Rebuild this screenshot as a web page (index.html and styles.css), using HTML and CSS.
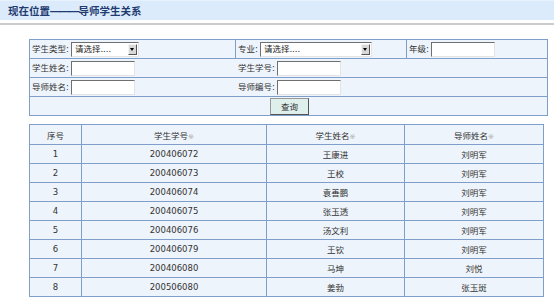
FILE: index.html
```html
<!DOCTYPE html>
<html lang="zh-CN">
<head>
    <meta charset="UTF-8">
    <title>导师学生关系</title>
    <link rel="stylesheet" href="styles.css">
</head>
<body>

    <div class="titleBar">现在位置<span class="dash">———</span>导师学生关系</div>
    <div class="titleLine"></div>

    <table class="searchTable">
        <tr>
            <td class="w1">学生类型:<span class="sel sel1">请选择....<i class="arrow"></i></span></td>
            <td class="w2">专业:<span class="sel sel2">请选择....<i class="arrow"></i></span></td>
            <td class="w3">年级:<span class="inp"></span></td>
        </tr>
        <tr>
            <td>学生姓名:<span class="inp"></span></td>
            <td colspan="2" class="noLeft">学生学号:<span class="inp"></span></td>
        </tr>
        <tr>
            <td>导师姓名:<span class="inp"></span></td>
            <td colspan="2" class="noLeft">导师编号:<span class="inp"></span></td>
        </tr>
        <tr>
            <td colspan="3" class="center"><button class="btn">查询</button></td>
        </tr>
    </table>

    <table class="listTable">
        <tr class="head">
            <td class="c1">序号</td>
            <td class="c2">学生学号<span class="mark">※</span></td>
            <td class="c3">学生姓名<span class="mark">※</span></td>
            <td class="c4">导师姓名<span class="mark">※</span></td>
        </tr>
        <tr><td>1</td><td>200406072</td><td>王康进</td><td>刘明军</td></tr>
        <tr><td>2</td><td>200406073</td><td>王校</td><td>刘明军</td></tr>
        <tr><td>3</td><td>200406074</td><td>袁善鹏</td><td>刘明军</td></tr>
        <tr><td>4</td><td>200406075</td><td>张玉透</td><td>刘明军</td></tr>
        <tr><td>5</td><td>200406076</td><td>汤文利</td><td>刘明军</td></tr>
        <tr><td>6</td><td>200406079</td><td>王钦</td><td>刘明军</td></tr>
        <tr><td>7</td><td>200406080</td><td>马坤</td><td>刘悦</td></tr>
        <tr><td>8</td><td>200506080</td><td>姜勃</td><td>张玉斑</td></tr>
    </table>

</body>
</html>
```

FILE: styles.css
```css
body {
    margin: 0;
    font-family: "DejaVu Sans", "Noto Sans CJK SC", sans-serif;
    font-size: 8.5px;
    color: #333;
    background: #fff;
}

.titleBar {
    height: 20px;
    line-height: 20px;
    padding-left: 8px;
    background: #dcebfb;
    border-top: 1px solid #e8f2fd;
    box-sizing: border-box;
    font-family: "Noto Sans CJK SC", sans-serif;
    font-size: 10.5px;
    font-weight: bold;
    color: #1f3b70;
}

.titleBar .dash {
    font-family: "Liberation Sans", sans-serif;
    letter-spacing: -1px;
}

.titleLine {
    margin-top: 3px;
    height: 2px;
    background: #cbcbcb;
}

table {
    border-collapse: collapse;
    margin-left: 29px;
    width: 515px;
    table-layout: fixed;
}

td {
    border: 1px solid #7f9ec9;
    background: #eef4fb;
    padding: 0;
    white-space: nowrap;
}

.searchTable {
    margin-top: 14px;
}

.searchTable td {
    height: 18px;
    padding-left: 2px;
}

.searchTable .w1 { width: 203px; }
.searchTable .w2 { width: 168px; }
.searchTable .w3 { width: 138px; }

.searchTable .noLeft {
    border-left-color: #eef4fb;
}

.searchTable tr:nth-child(2) td:first-child,
.searchTable tr:nth-child(3) td:first-child {
    border-right-color: #eef4fb;
}

.center {
    text-align: center;
}

.sel, .inp {
    display: inline-block;
    vertical-align: middle;
    height: 15px;
    box-sizing: border-box;
    background: #fff;
    border: 1px solid;
    border-color: #6f6f6f #e4e4e4 #e4e4e4 #6f6f6f;
    margin-left: 2px;
}

.inp {
    width: 64px;
}

.sel {
    position: relative;
    line-height: 13px;
    padding-left: 3px;
    color: #222;
}

.sel1 { width: 68px; }
.sel2 { width: 112px; }

.arrow {
    position: absolute;
    right: 1px;
    top: 1px;
    width: 9px;
    height: 11px;
    background: #d8d8d8;
    border: 1px solid;
    border-color: #f4f4f4 #555 #555 #f4f4f4;
    box-sizing: border-box;
}

.arrow::after {
    content: "";
    position: absolute;
    left: 1px;
    top: 3px;
    border-left: 2.5px solid transparent;
    border-right: 2.5px solid transparent;
    border-top: 3px solid #000;
}

.btn {
    width: 39px;
    height: 17px;
    padding: 0;
    font-family: "Noto Sans CJK SC", sans-serif;
    font-size: 8.5px;
    color: #333;
    background: #dff0ec;
    border: 1px solid;
    border-color: #999 #555 #555 #999;
    vertical-align: middle;
}

.listTable {
    margin-top: 8px;
}

.listTable td {
    height: 18px;
    text-align: center;
}

.listTable .head td {
    height: 19px;
}

.listTable .c1 { width: 51px; }
.listTable .c2 { width: 184px; }
.listTable .c3 { width: 137px; }
.listTable .c4 { width: 138px; }

.mark {
    color: #aaa;
    font-size: 7px;
}
```
